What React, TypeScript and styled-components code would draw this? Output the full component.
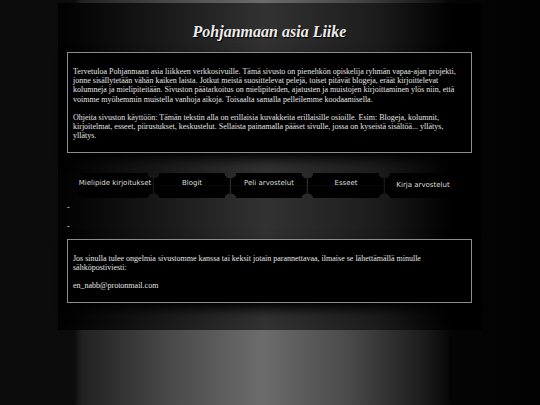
import React from 'react';
import styled, { createGlobalStyle } from 'styled-components';

const GlobalStyle = createGlobalStyle`
  html, body {
    margin: 0;
    padding: 0;
    background: #080808;
  }
`;

const Page = styled.div`
  min-height: 405px;
  padding-top: 3px;
  box-sizing: border-box;
  background-color: #080808;
  background-image:
    linear-gradient(
      90deg,
      #0b0b0b 0%,
      #212121 2%,
      #4a4a4a 26%,
      #6c6c6c 50%,
      #4a4a4a 73%,
      #1c1c1c 93%,
      #060606 100%
    ),
    linear-gradient(90deg, #0c0c0c 0%, #0a0a0a 50%, #020202 100%);
  background-repeat: no-repeat;
  background-position: 74px 0, 0 0;
  background-size: 376px 100%, 100% 100%;
  font-family: 'Liberation Serif', 'Times New Roman', serif;
`;

const Container = styled.div`
  width: 424px;
  margin-left: 58px;
  padding: 18px 10px 27px 9px;
  box-sizing: border-box;
  background: linear-gradient(
    90deg,
    #000 0%,
    #141414 20%,
    #323232 49%,
    #1c1c1c 75%,
    #000 93%,
    #000 100%
  );
`;

const Title = styled.h1`
  margin: 0 0 9px;
  text-align: center;
  font-family: 'Liberation Serif', 'Times New Roman', serif;
  font-style: italic;
  font-weight: bold;
  font-size: 16px;
  line-height: 22px;
  color: #ececec;
  text-shadow: 1px 1px 1px #000;
`;

const Box = styled.div`
  background: #000;
  border: 1px solid #8c8c8c;
  padding: 5px 6px 3px 5px;
  box-shadow: 0 6px 10px #000;
`;

const Para = styled.p`
  margin: 9px 0;
  font-size: 8px;
  line-height: 9.2px;
  color: #e4e4e4;
`;

const TabRow = styled.nav`
  display: flex;
  gap: 1px;
  margin: 20px 0 0 10px;
`;

const Tab = styled.a<{ $shift?: number }>`
  width: 76px;
  height: 25px;
  flex: none;
  display: flex;
  justify-content: center;
  align-items: center;
  padding-bottom: ${p => 5 - (p.$shift ?? 0)}px;
  box-sizing: border-box;
  white-space: nowrap;
  font-family: 'DejaVu Sans', Verdana, sans-serif;
  font-size: 7px;
  color: #dcdcdc;
  text-decoration: none;
  background:
    radial-gradient(circle at top left, transparent 5px, #000 5.5px) top left,
    radial-gradient(circle at top right, transparent 5px, #000 5.5px) top right,
    radial-gradient(circle at bottom right, transparent 5px, #000 5.5px) bottom right,
    radial-gradient(circle at bottom left, transparent 5px, #000 5.5px) bottom left;
  background-size: 51% 51%;
  background-repeat: no-repeat;
`;

const Notes = styled.div`
  margin: 5px 0 8px;
`;

const Dash = styled.p`
  margin: 9px 0;
  font-size: 8px;
  line-height: 9.2px;
  color: #e4e4e4;
  &:first-child {
    margin-top: 0;
  }
  &:last-child {
    margin-bottom: 0;
  }
`;

const tabs = [
  { label: 'Mielipide kirjoitukset' },
  { label: 'Blogit' },
  { label: 'Peli arvostelut' },
  { label: 'Esseet' },
  { label: 'Kirja arvostelut', shift: 3 },
];

export default function App() {
  return (
    <>
      <GlobalStyle />
      <Page>
        <Container>
          <Title>Pohjanmaan asia Liike</Title>
          <Box>
            <Para>
              Tervetuloa Pohjanmaan asia liikkeen verkkosivuille. Tämä sivusto on pienehkön
              opiskelija ryhmän vapaa-ajan projekti, jonne sisällytetään vähän kaiken laista.
              Jotkut meistä suosittelevat pelejä, toiset pitävät blogeja, eräät kirjoittelevat
              kolumneja ja mielipiteitään. Sivuston päätarkoitus on mielipiteiden, ajatusten ja
              muistojen kirjoittaminen ylös niin, että voimme myöhemmin muistella vanhoja aikoja.
              Toisaalta samalla pelleilemme koodaamisella.
            </Para>
            <Para>
              Ohjeita sivuston käyttöön: Tämän tekstin alla on erillaisia kuvakkeita erillaisille
              osioille. Esim: Blogeja, kolumnit, kirjoitelmat, esseet, piirustukset, keskustelut.
              Sellaista painamalla pääset sivulle, jossa on kyseistä sisältöä... yllätys, yllätys.
            </Para>
          </Box>
          <TabRow>
            {tabs.map(t => (
              <Tab key={t.label} href="#" $shift={t.shift}>
                {t.label}
              </Tab>
            ))}
          </TabRow>
          <Notes>
            <Dash>-</Dash>
            <Dash>-</Dash>
          </Notes>
          <Box>
            <Para>
              Jos sinulla tulee ongelmia sivustomme kanssa tai keksit jotain parannettavaa,
              ilmaise se lähettämällä minulle sähköpostiviesti:
            </Para>
            <Para>en_nabb@protonmail.com</Para>
          </Box>
        </Container>
      </Page>
    </>
  );
}
